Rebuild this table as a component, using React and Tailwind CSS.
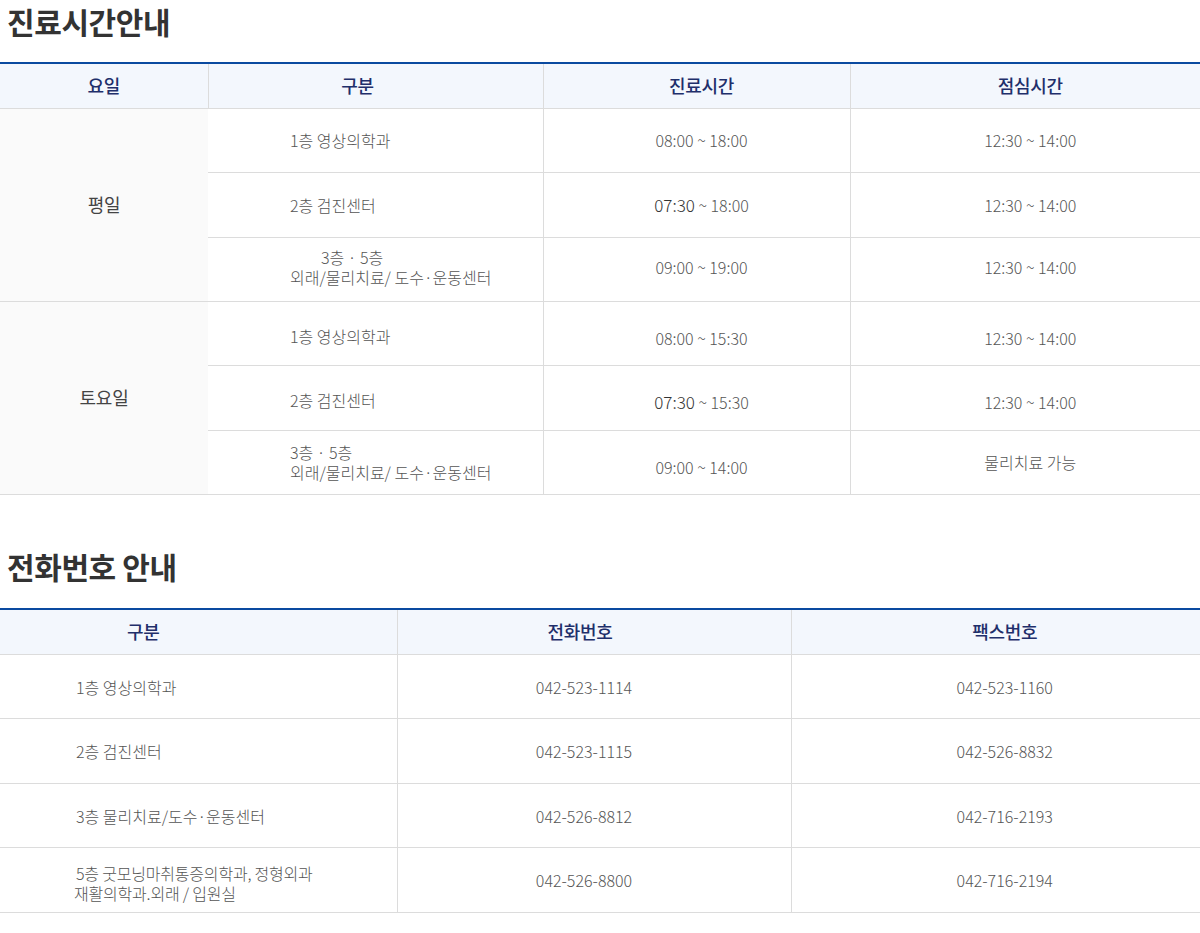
const font = { fontFamily: '"Noto Sans CJK KR", "Noto Sans", sans-serif' }

const hours = [
  {
    day: '평일',
    rows: [
      { dept: ['1층 영상의학과'], time: ['08:00', '18:00'], lunch: '12:30 ~ 14:00' },
      { dept: ['2층 검진센터'], time: ['07:30', '18:00'], early: true, lunch: '12:30 ~ 14:00' },
      { dept: ['3층 · 5층', '외래/물리치료/ 도수·운동센터'], indent: true, time: ['09:00', '19:00'], lunch: '12:30 ~ 14:00', up: true },
    ],
  },
  {
    day: '토요일',
    rows: [
      { dept: ['1층 영상의학과'], time: ['08:00', '15:30'], lunch: '12:30 ~ 14:00', shift: true },
      { dept: ['2층 검진센터'], time: ['07:30', '15:30'], early: true, lunch: '12:30 ~ 14:00', shift: true },
      { dept: ['3층 · 5층', '외래/물리치료/ 도수·운동센터'], time: ['09:00', '14:00'], lunch: '물리치료 가능', last: true },
    ],
  },
]

const phones = [
  { dept: ['1층 영상의학과'], tel: '042-523-1114', fax: '042-523-1160' },
  { dept: ['2층 검진센터'], tel: '042-523-1115', fax: '042-526-8832' },
  { dept: ['3층 물리치료/도수·운동센터'], tel: '042-526-8812', fax: '042-716-2193' },
  { dept: ['5층 굿모닝마취통증의학과, 정형외과', '재활의학과.외래 / 입원실'], tel: '042-526-8800', fax: '042-716-2194', tight: true },
]

const th = 'border-b border-[#dcdcdc] text-[18px] font-medium text-[#1f2f6b] tracking-[-0.3px]'
const td = 'border-b border-[#dcdcdc] text-[16px] font-light text-[#555] leading-[20px]'

function Title({ children, className = '' }) {
  return (
    <h2 className={`pl-[7px] text-[30px] font-bold text-[#333] leading-[38px] tracking-[-0.4px] ${className}`}>
      {children}
    </h2>
  )
}

export default function App() {
  return (
    <div className="w-[1200px] bg-white" style={font}>
      <Title className="pt-[2px]">진료시간안내</Title>

      <table className="w-full table-fixed border-collapse mt-[22px] border-t-2 border-[#0a4aa0]">
        <colgroup>
          <col className="w-[208px]" />
          <col className="w-[335px]" />
          <col className="w-[307px]" />
          <col />
        </colgroup>
        <thead>
          <tr className="bg-[#f3f7fd] h-[45px]">
            <th className={`${th} border-r border-r-[#dcdcdc]`}>요일</th>
            <th className={`${th} border-r border-r-[#dcdcdc] pr-[36px]`}>구분</th>
            <th className={`${th} border-r border-r-[#dcdcdc] pl-[10px]`}>진료시간</th>
            <th className={`${th} pl-[10px]`}>점심시간</th>
          </tr>
        </thead>
        <tbody>
          {hours.map((group) =>
            group.rows.map((row, i) => (
              <tr key={group.day + i} className={i % 2 === 1 ? 'h-[65px]' : 'h-[64px]'}>
                {i === 0 && (
                  <td
                    rowSpan={group.rows.length}
                    className="border-b border-[#dcdcdc] bg-[#fafafa] text-center text-[18px] font-normal text-[#444] tracking-[-0.3px]"
                  >
                    {group.day}
                  </td>
                )}
                <td className={`${td} pl-[82px] ${row.shift ? 'pt-[5px]' : ''} ${row.up ? 'pb-[4px]' : ''}`}>
                  {row.dept.map((line, j) => (
                    <div key={j} className={row.indent && j === 0 ? 'pl-[31px]' : ''}>
                      {line}
                    </div>
                  ))}
                </td>
                <td
                  className={`${td} border-l border-r border-[#dcdcdc] text-center pl-[10px] ${row.shift ? 'pt-[9px]' : ''} ${row.last ? 'pt-[10px]' : ''} ${row.up ? 'pb-[4px]' : ''}`}
                >
                  {row.early ? <span className="text-[17px] text-[#333]">{row.time[0]}</span> : row.time[0]}
                  {' ~ '}
                  {row.time[1]}
                </td>
                <td className={`${td} text-center pl-[10px] ${row.shift ? 'pt-[9px]' : ''} ${row.up ? 'pb-[4px]' : ''}`}>
                  {row.lunch}
                </td>
              </tr>
            ))
          )}
        </tbody>
      </table>

      <Title className="mt-[52px]">전화번호 안내</Title>

      <table className="w-full table-fixed border-collapse mt-[23px] border-t-2 border-[#0a4aa0]">
        <colgroup>
          <col className="w-[397px]" />
          <col className="w-[394px]" />
          <col />
        </colgroup>
        <thead>
          <tr className="bg-[#f3f7fd] h-[46px]">
            <th className={`${th} border-r border-r-[#dcdcdc] pr-[110px]`}>구분</th>
            <th className={`${th} border-r border-r-[#dcdcdc] pr-[28px]`}>전화번호</th>
            <th className={`${th} pl-[18px]`}>팩스번호</th>
          </tr>
        </thead>
        <tbody>
          {phones.map((row, i) => (
            <tr key={i} className={i % 2 === 1 ? 'h-[65px]' : 'h-[64px]'}>
              <td className={`${td} pl-[76px] ${row.tight ? 'leading-[18px] pt-[5px] tracking-[-0.2px]' : ''}`}>
                {row.dept.map((line, j) => (
                  <div key={j} className={row.tight && j === 1 ? '-ml-[2px]' : ''}>
                    {line}
                  </div>
                ))}
              </td>
              <td className={`${td} border-l border-r border-[#dcdcdc] text-center pr-[20px]`}>{row.tel}</td>
              <td className={`${td} text-center pl-[18px]`}>{row.fax}</td>
            </tr>
          ))}
        </tbody>
      </table>
    </div>
  )
}
